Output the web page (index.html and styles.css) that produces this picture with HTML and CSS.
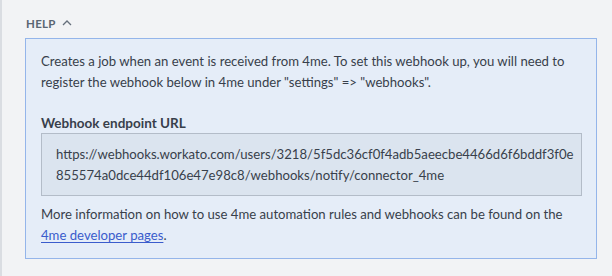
FILE: index.html
```html
<!DOCTYPE html>
<html>
<head>
<meta charset="utf-8">
<link rel="stylesheet" href="styles.css">
</head>
<body>
<div class="panel">
  <div class="help-header">
    <span class="help-title">Help</span>
    <svg class="chevron" width="10" height="6" viewBox="0 0 10 6"><path d="M1 5 L5 1 L9 5" fill="none" stroke="#66707c" stroke-width="1.3"/></svg>
  </div>
  <div class="help-box">
    <p class="intro">Creates a job when an event is received from 4me. To set this webhook up, you will need to register the webhook below in 4me under "settings" =&gt; "webhooks".</p>
    <div class="label">Webhook endpoint URL</div>
    <div class="url-box">https://webhooks.workato.com/users/3218/5f5dc36cf0f4adb5aeecbe4466d6f6bddf3f0e 855574a0dce44df106e47e98c8/webhooks/notify/connector_4me</div>
    <p class="more">More information on how to use 4me automation rules and webhooks can be found on the <a href="#">4me developer pages</a>.</p>
  </div>
</div>
</body>
</html>
```
FILE: styles.css
```css
html, body {
  margin: 0;
  padding: 0;
  background: #f2f3f5;
}
body {
  font-family: Lato, "Liberation Sans", sans-serif;
  color: #383f4b;
  font-size: 13.15px;
}
.panel {
  border-left: 2px solid #dadde2;
  padding: 15px 15px 0 23px;
  height: 276px;
  box-sizing: border-box;
}
.help-header {
  display: flex;
  align-items: center;
  gap: 6px;
  height: 16px;
  margin-bottom: 7px;
  padding-left: 1px;
}
.help-title {
  font-size: 11.5px;
  font-weight: 700;
  text-transform: uppercase;
  letter-spacing: 0.3px;
  color: #5a6572;
}
.chevron { display: block; }
.help-box {
  background: #e5edf8;
  border: 1px solid #94b5ea;
  padding: 12px 15px 12px 15px;
}
.intro, .more {
  margin: 0;
  line-height: 21px;
}
.label {
  margin-top: 20px;
  font-weight: 700;
  font-size: 13.5px;
  line-height: 20px;
}
.url-box {
  background: #dbe4ef;
  border: 1px solid #b3bcc8;
  padding: 10px 14px;
  line-height: 20.5px;
  margin-right: -1px;
}
.more { margin-top: 8px; }
.more a { color: #3a5ccc; text-underline-offset: 2px; }
```
